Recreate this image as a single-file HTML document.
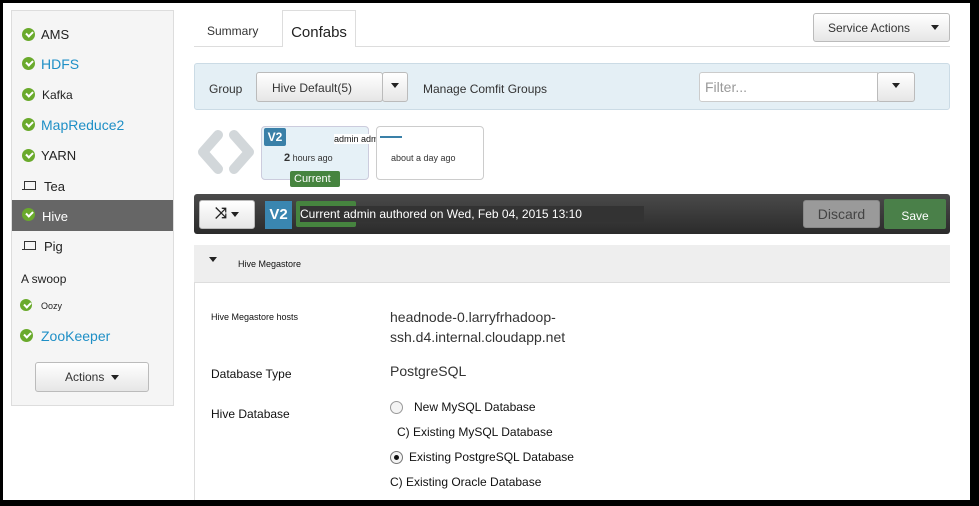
<!DOCTYPE html>
<html><head><meta charset="utf-8"><style>
*{box-sizing:border-box;margin:0;padding:0}
body{width:979px;height:506px;background:#000;position:relative;overflow:hidden;font-family:"Liberation Sans",Arial,sans-serif;color:#333}
.a{position:absolute}
#pg{left:3px;top:3px;width:967px;height:497px;background:#fff}
.sb{left:11px;top:10px;width:163px;height:396px;background:#f5f5f5;border:1px solid #ddd}
.it{position:absolute;left:22px;font-size:13px;color:#222;line-height:16px}
.chk{position:absolute;left:22px;width:13px;height:13px;border-radius:50%;background:#6aaa2c}
.chk::after{content:"";position:absolute;left:3.5px;top:3px;width:5px;height:3px;border-left:2px solid #fff;border-bottom:2px solid #fff;transform:rotate(-45deg)}
.lap{position:absolute;left:22px;width:14px;height:10px}
.lap::before{content:"";position:absolute;left:2px;top:0;width:10px;height:7px;border:1px solid #333}
.lap::after{content:"";position:absolute;left:0;top:8px;width:14px;height:1px;background:#333}
.blue{color:#1e8fc6;font-size:14px}
.btn{background:linear-gradient(#fff,#e6e6e6);border:1px solid #bbb;border-radius:3px}
.car{display:inline-block;width:0;height:0;border-left:4px solid transparent;border-right:4px solid transparent;border-top:5px solid #222;vertical-align:middle}
</style></head><body>
<div id="pg" class="a"></div>
<div class="a sb"></div>
<div class="chk" style="top:28px"></div><div class="it" style="left:41px;top:27px">AMS</div>
<div class="chk" style="top:57px"></div><div class="it blue" style="left:41px;top:56px">HDFS</div>
<div class="chk" style="top:88px"></div><div class="it" style="left:42px;top:87px;font-size:12px">Kafka</div>
<div class="chk" style="top:118px"></div><div class="it blue" style="left:41px;top:117px">MapReduce2</div>
<div class="chk" style="top:149px"></div><div class="it" style="left:41px;top:148px">YARN</div>
<div class="lap" style="top:181px"></div><div class="it" style="left:44px;top:179px">Tea</div>
<div class="a" style="left:12px;top:200px;width:161px;height:31px;background:#666"></div>
<div class="chk" style="top:208px"></div><div class="it" style="left:42px;top:209px;color:#fff">Hive</div>
<div class="lap" style="top:241px"></div><div class="it" style="left:44px;top:239px">Pig</div>
<div class="it" style="left:21px;top:271px;font-size:12px">A swoop</div>
<div class="chk" style="top:299px;left:20px;width:12px;height:12px"></div><div class="it" style="left:41px;top:298px;font-size:9px">Oozy</div>
<div class="chk" style="top:329px;left:20px"></div><div class="it blue" style="left:41px;top:328px">ZooKeeper</div>
<div class="a btn" style="left:35px;top:362px;width:114px;height:30px;font-size:12px;text-align:center;line-height:28px">Actions &nbsp;<span class="car"></span></div>

<div class="a" style="left:194px;top:46px;width:756px;height:1px;background:#ddd"></div>
<div class="a" style="left:207px;top:24px;font-size:12px">Summary</div>
<div class="a" style="left:282px;top:10px;width:74px;height:37px;background:#fff;border:1px solid #ddd;border-bottom:none;font-size:15px;text-align:center;line-height:44px;color:#222">Confabs</div>
<div class="a btn" style="left:813px;top:13px;width:137px;height:29px;font-size:12px;line-height:28px;padding-left:14px">Service Actions <span class="car" style="margin-left:18px;margin-top:-3px"></span></div>

<div class="a" style="left:194px;top:63px;width:756px;height:47px;background:#e4eff5;border:1px solid #cbdbe5;border-radius:3px"></div>
<div class="a" style="left:209px;top:82px;font-size:12px">Group</div>
<div class="a btn" style="left:256px;top:72px;width:127px;height:30px;font-size:12px;line-height:30px;padding-left:15px">Hive Default(5)</div>
<div class="a btn" style="left:382px;top:72px;width:26px;height:30px;text-align:center;line-height:26px"><span class="car"></span></div>
<div class="a" style="left:423px;top:82px;font-size:12px">Manage Comfit Groups</div>
<div class="a" style="left:699px;top:72px;width:179px;height:30px;background:#fff;border:1px solid #ccc;border-radius:3px 0 0 3px;font-size:14px;color:#999;padding:6px 5px">Filter...</div>
<div class="a btn" style="left:877px;top:72px;width:38px;height:30px;text-align:center;line-height:26px"><span class="car"></span></div>

<svg class="a" style="left:194px;top:125px" width="64" height="54"><path d="M24 10 L9 27 L24 44 M40 10 L55 27 L40 44" fill="none" stroke="#d2d7da" stroke-width="10" stroke-linecap="round" stroke-linejoin="round"/></svg>
<div class="a" style="left:261px;top:126px;width:108px;height:54px;background:#e6f1f7;border:1px solid #ccd;border-radius:4px"></div>
<div class="a" style="left:264px;top:128px;width:22px;height:18px;background:#3a80a8;color:#fff;font-weight:bold;font-size:12px;text-align:center;line-height:18px;border-radius:2px">V2</div>
<div class="a" style="left:334px;top:134px;font-size:9px;background:#fff;color:#111">admin admin</div>
<div class="a" style="left:284px;top:152px;font-size:9px"><b style="font-size:11px">2</b> hours ago</div>
<div class="a" style="left:290px;top:171px;width:50px;height:16px;background:#46843f;color:#fff;font-size:11px;padding-left:4px;line-height:16px;border-radius:2px">Current</div>
<div class="a" style="left:376px;top:126px;width:108px;height:54px;background:#fff;border:1px solid #ccc;border-radius:4px"></div>
<div class="a" style="left:380px;top:128px;width:22px;height:10px;border-bottom:2px solid #3a80a8;background:#fff"></div>
<div class="a" style="left:391px;top:153px;font-size:9px">about a day ago</div>

<div class="a" style="left:194px;top:194px;width:756px;height:40px;background:linear-gradient(#4a4a4a,#2b2b2b);border-radius:3px"></div>
<div class="a btn" style="left:199px;top:200px;width:56px;height:29px;text-align:center;line-height:26px;font-size:15px;font-weight:bold;color:#222">⤨ <span class="car"></span></div>
<div class="a" style="left:265px;top:201px;width:27px;height:28px;background:#3a86b0;color:#fff;font-weight:bold;font-size:15px;text-align:center;line-height:28px">V2</div>
<div class="a" style="left:296px;top:201px;width:60px;height:26px;background:#46843f;border-radius:2px"></div>
<div class="a" style="left:300px;top:206px;width:344px;height:16px;background:#333;color:#fff;font-size:12px;line-height:16px">Current admin authored on Wed, Feb 04, 2015 13:10</div>
<div class="a" style="left:803px;top:200px;width:77px;height:28px;background:#9a9a9a;border:1px solid #888;border-radius:3px;color:#444;font-size:14px;text-align:center;line-height:26px">Discard</div>
<div class="a" style="left:884px;top:199px;width:62px;height:30px;background:#4a8049;border-radius:2px;color:#fff;font-size:12px;text-align:center;line-height:34px">Save</div>

<div class="a" style="left:194px;top:245px;width:756px;height:38px;background:#eee;border-bottom:1px solid #ddd"></div>
<div class="a" style="left:194px;top:283px;width:1px;height:217px;background:#ddd"></div>
<div class="a car" style="left:209px;top:257px"></div>
<div class="a" style="left:238px;top:259px;font-size:9px;color:#111">Hive Megastore</div>
<div class="a" style="left:211px;top:312px;font-size:9px;color:#111">Hive Megastore hosts</div>
<div class="a" style="left:390px;top:307px;font-size:14px;line-height:20px;color:#333">headnode-0.larryfrhadoop-<br>ssh.d4.internal.cloudapp.net</div>
<div class="a" style="left:211px;top:367px;font-size:12px;color:#111">Database Type</div>
<div class="a" style="left:390px;top:363px;font-size:14px">PostgreSQL</div>
<div class="a" style="left:211px;top:407px;font-size:12px;color:#111">Hive Database</div>
<div class="a" style="left:390px;top:401px;width:13px;height:13px;border:1px solid #999;border-radius:50%;background:#f4f4f4"></div>
<div class="a" style="left:414px;top:400px;font-size:12px;color:#111">New MySQL Database</div>
<div class="a" style="left:397px;top:425px;font-size:12px;color:#111">C) Existing MySQL Database</div>
<div class="a" style="left:390px;top:451px;width:13px;height:13px;border:1px solid #777;border-radius:50%;background:#f4f4f4"></div>
<div class="a" style="left:394px;top:455px;width:5px;height:5px;border-radius:50%;background:#111"></div>
<div class="a" style="left:409px;top:450px;font-size:12px;color:#111">Existing PostgreSQL Database</div>
<div class="a" style="left:390px;top:475px;font-size:12px;color:#111">C) Existing Oracle Database</div>
</body></html>
